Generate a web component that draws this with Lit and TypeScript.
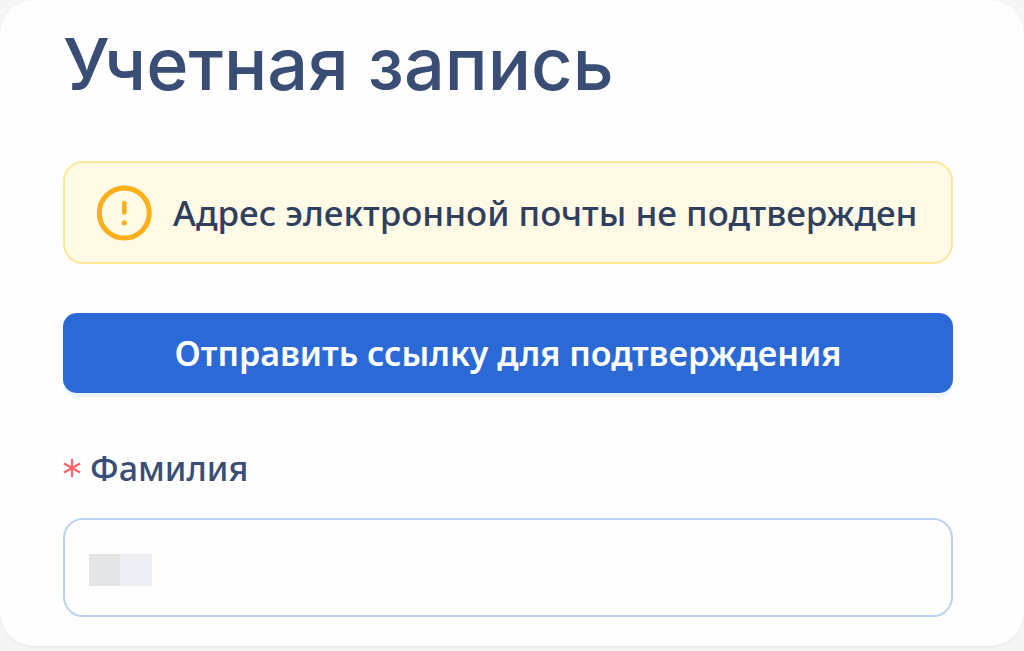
import { LitElement, html, css, svg } from "lit";
import { customElement, property } from "lit/decorators.js";

@customElement("warning-icon")
class WarningIcon extends LitElement {
  static styles = css`
    :host { display: block; flex: none; width: 56px; height: 56px; }
    .icon { display: block; width: 100%; height: 100%; }
  `;
  render() {
    return html`<svg class="icon" viewBox="0 0 56 56" fill="none" stroke="#fcaf17" stroke-linecap="round" aria-hidden="true">
      ${svg`<circle cx="27.3" cy="28" r="25" stroke-width="5"></circle>
      <path d="M27.3 18V27.5" stroke-width="4.6"></path>
      <circle cx="27.3" cy="37.8" r="2.6" fill="#fcaf17" stroke="none"></circle>`}
    </svg>`;
  }
}

@customElement("account-alert")
class AccountAlert extends LitElement {
  @property() message = "";
  static styles = css`
    :host { display: block; }
    .alert {
      display: flex; align-items: center; gap: 20px;
      padding: 21px 32px;
      border: 2px solid #ffe699; border-radius: 20px;
      background: #fffae6; color: #2e405e;
    }
    .text { margin: 0; font-size: 35px; line-height: 57px; font-weight: 500; }
  `;
  render() {
    return html`<div class="alert" role="alert">
      <warning-icon></warning-icon>
      <p class="text">${this.message}</p>
    </div>`;
  }
}

@customElement("app-root")
class AppRoot extends LitElement {
  static styles = css`
    :host {
      display: block; box-sizing: border-box; min-height: 100vh; padding-bottom: 4px;
      background: #f5f5f5; color: #3a4e75;
      font-family: "Noto Sans", "Open Sans", sans-serif;
    }
    .card {
      display: flex; flex-direction: column; align-items: stretch;
      padding: 24px 71px 29px 63px;
      border-radius: 34px; background: #fefefe;
      box-shadow: 0 1px 3px #00000012;
    }
    .title {
      margin: 0 0 57px;
      font-family: Inter, sans-serif; font-size: 72px; line-height: 80px; font-weight: 500;
    }
    .send {
      margin: 49px 0 55px; padding: 12px 32px;
      border: 0; border-radius: 14px; background: #2b6ad6; color: #fff;
      box-shadow: 0 4px 0 #ebf5ff;
      font-family: inherit; font-size: 34px; line-height: 56px; font-weight: 600;
      cursor: pointer;
    }
    .label { display: flex; align-items: center; gap: 9px; margin-bottom: 30px; font-size: 34px; line-height: 40px; font-weight: 500; }
    .star { flex: none; width: 18px; height: 18px; }
    .field {
      box-sizing: border-box; width: 100%; padding: 20px 24px;
      border: 2px solid #bcd2f2; border-radius: 20px;
      background: linear-gradient(90deg, #e4e5e7 50%, #eeeff4 50%) 24px 34px / 63px 32px no-repeat #fefefe;
      color: inherit; font-family: inherit; font-size: 34px; line-height: 55px; height: 99px;
    }
  `;
  render() {
    return html`<main class="card">
      <h1 class="title">Учетная запись</h1>
      <account-alert message="Адрес электронной почты не подтвержден"></account-alert>
      <button class="send" type="button">Отправить ссылку для подтверждения</button>
      <label class="label" for="surname">
        <svg class="star" viewBox="0 0 18 18" fill="none" stroke="#ff6269" stroke-width="2.2" aria-hidden="true">
          <path d="M9 0V18M1 4.5L17 13.5M17 4.5L1 13.5"></path>
        </svg>
        <span>Фамилия</span>
      </label>
      <input class="field" id="surname" name="surname" type="text" required />
    </main>`;
  }
}
